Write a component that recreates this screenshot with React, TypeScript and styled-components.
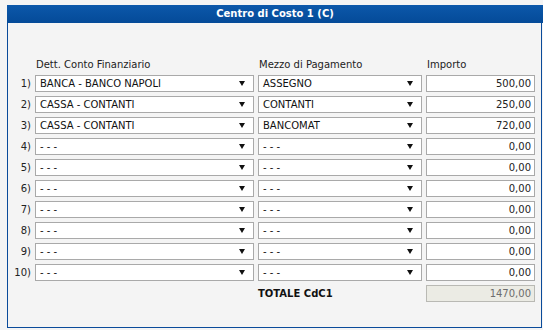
import React from "react";
import styled, { createGlobalStyle } from "styled-components";

const Global = createGlobalStyle`
  html, body { margin: 0; padding: 0; background: #f4f4f4; }
  body { font-family: "DejaVu Sans", Verdana, sans-serif; font-size: 10px; color: #222; }
  * { box-sizing: border-box; }
`;

const Page = styled.div`
  width: 543px;
  height: 330px;
  overflow: hidden;
  padding: 5px 0 0 7px;
`;

const Panel = styled.div`
  width: 536px;
  display: flex;
  flex-direction: column;
`;

const Header = styled.div`
  height: 18px;
  background: linear-gradient(#0c58aa, #044a98);
  color: #fff;
  font-weight: bold;
  font-size: 10px;
  line-height: 18px;
  text-align: center;
`;

const Body = styled.div`
  margin-right: 1px;
  border: 1px solid #0a4b9a;
  border-top: none;
  background: #f4f4f4;
  padding: 36px 0 25px 0;
`;

const Grid = styled.div`
  display: grid;
  grid-template-columns: 23px 219px 164px 109px;
  column-gap: 4px;
  row-gap: 4px;
  grid-auto-rows: 17px;
  grid-template-rows: 12px;
  align-items: center;
`;

const Label = styled.div`
  line-height: 12px;
  color: #222;
  padding-left: 1px;
`;

const Num = styled.div`
  text-align: right;
  color: #222;
`;

const Select = styled.div`
  height: 17px;
  border: 1px solid #a9a9a9;
  background: #fff;
  display: flex;
  align-items: center;
  justify-content: space-between;
  padding: 0 8px 0 4px;
  color: #111;
  white-space: nowrap;
`;

const Arrow = styled.span`
  width: 0;
  height: 0;
  border-left: 3px solid transparent;
  border-right: 3px solid transparent;
  border-top: 5px solid #111;
`;

const Amount = styled.div<{ $disabled?: boolean }>`
  height: 17px;
  border: 1px solid ${(p) => (p.$disabled ? "#b9b9b4" : "#a9a9a9")};
  background: ${(p) => (p.$disabled ? "#ebebe4" : "#fff")};
  color: ${(p) => (p.$disabled ? "#6d6d6d" : "#222")};
  display: flex;
  align-items: center;
  justify-content: flex-end;
  padding-right: 3px;
`;

const TotalLabel = styled.div`
  font-weight: bold;
  color: #111;
  grid-column: 3;
  padding-left: 0;
`;

const rows = [
  ["BANCA - BANCO NAPOLI", "ASSEGNO", "500,00"],
  ["CASSA - CONTANTI", "CONTANTI", "250,00"],
  ["CASSA - CONTANTI", "BANCOMAT", "720,00"],
  ["- - -", "- - -", "0,00"],
  ["- - -", "- - -", "0,00"],
  ["- - -", "- - -", "0,00"],
  ["- - -", "- - -", "0,00"],
  ["- - -", "- - -", "0,00"],
  ["- - -", "- - -", "0,00"],
  ["- - -", "- - -", "0,00"],
];

export default function App() {
  return (
    <Page>
      <Global />
      <Panel>
        <Header>Centro di Costo 1 (C)</Header>
        <Body>
          <Grid>
            <span />
            <Label>Dett. Conto Finanziario</Label>
            <Label>Mezzo di Pagamento</Label>
            <Label>Importo</Label>
            {rows.map((r, i) => (
              <React.Fragment key={i}>
                <Num>{i + 1})</Num>
                <Select>
                  <span>{r[0]}</span>
                  <Arrow />
                </Select>
                <Select>
                  <span>{r[1]}</span>
                  <Arrow />
                </Select>
                <Amount>{r[2]}</Amount>
              </React.Fragment>
            ))}
            <TotalLabel>TOTALE CdC1</TotalLabel>
            <Amount $disabled>1470,00</Amount>
          </Grid>
        </Body>
      </Panel>
    </Page>
  );
}
